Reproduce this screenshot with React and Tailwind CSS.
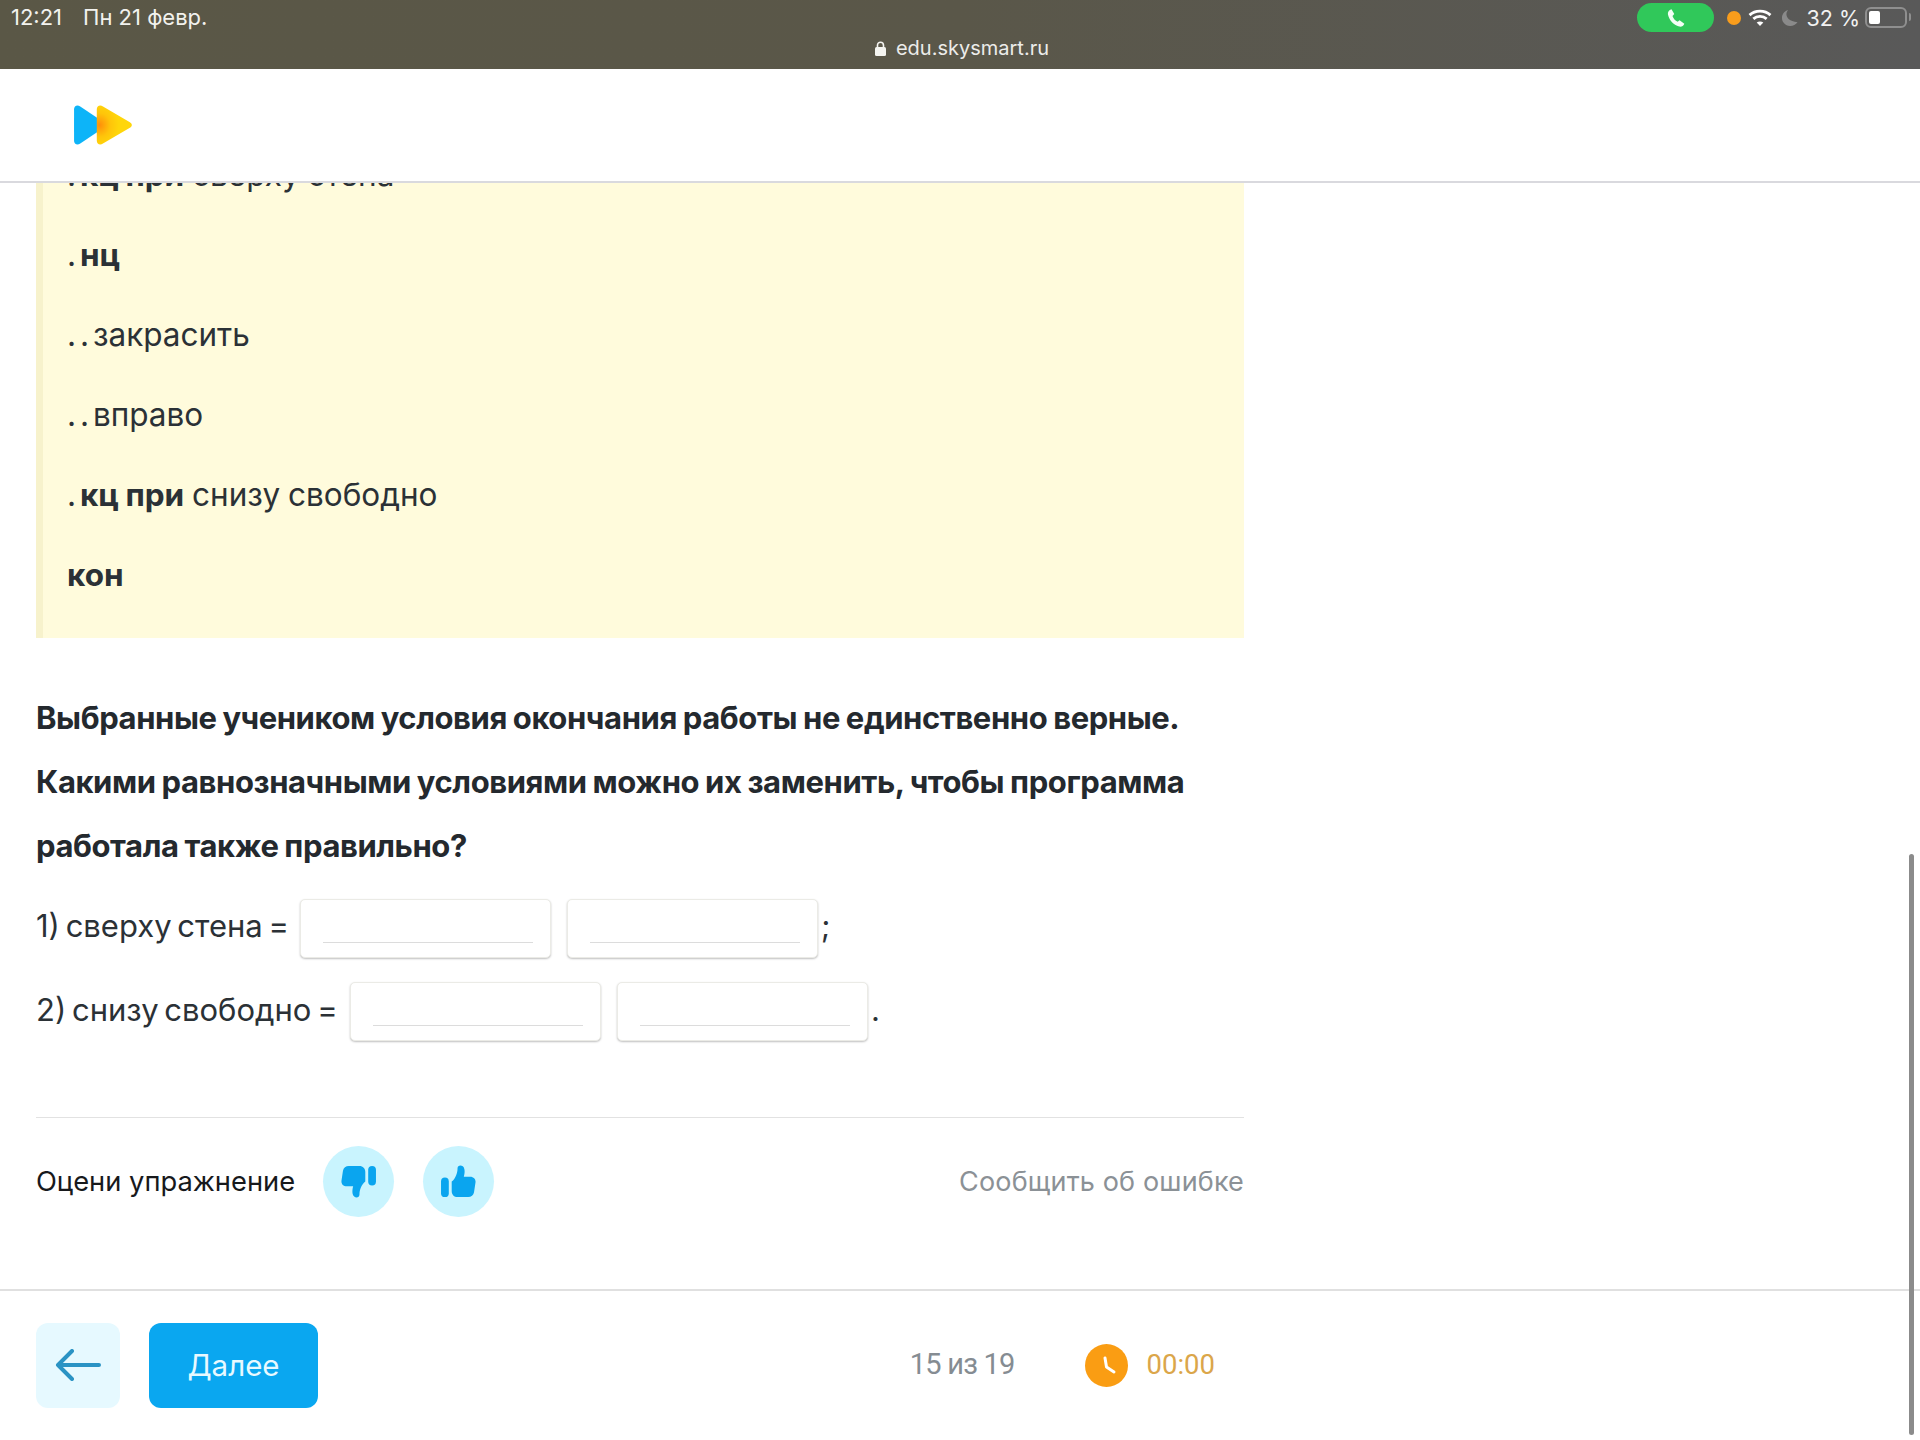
const font = "font-['Inter','Liberation_Sans',sans-serif]";
const digits = "font-['Roboto','Liberation_Sans',sans-serif]";

function Logo() {
    return (
        <svg width="60" height="40" viewBox="0 0 58 42" preserveAspectRatio="none">
            <defs>
                <radialGradient id="glow" cx="0.08" cy="0.5" r="0.55">
                    <stop offset="0" stopColor="#ff8f0a" />
                    <stop offset="0.55" stopColor="#ffc40a" />
                    <stop offset="1" stopColor="#ffd60a" />
                </radialGradient>
            </defs>
            <path d="M1 4.500C1 1 4 -0.500 7 1.500L24 14V28L7 40.500C4 42.500 1 41 1 37.500Z" fill="#0db4f8" />
            <path d="M23 4.500C23 1 26 -0.500 29 1.500L55 18C57.500 19.700 57.500 22.300 55 24L29 40.500C26 42.500 23 41 23 37.500Z" fill="url(#glow)" />
        </svg>
    );
}

function StatusBar() {
    return (
        <div className={`relative h-[69px] shrink-0 bg-gradient-to-r from-[#5a5746] via-[#5a5749] to-[#595959] text-white ${font}`}>
            <div className="flex items-start justify-between pl-[11px] pr-[13px] pt-[3px]">
                <div className="flex gap-[21px] pt-[1px] text-[22px] leading-[26px] text-[#f2f2ee]">
                    <span>12:21</span>
                    <span>Пн 21 февр.</span>
                </div>
                <div className="flex h-[29px] items-center">
                    <div className="mr-[13px] flex h-[29px] w-[77px] items-center justify-center rounded-full bg-[#30c85a]">
                        <svg width="20" height="20" viewBox="0 0 24 24" fill="#f4fff6">
                            <path d="M6.600 1.500 9.900 7.200 7.800 9.500C8.800 12.500 11 15 14 16.500L16.300 14.800 22 18.800C21 21.500 18.500 23 15.800 22.300 9 20.500 3.500 14 2.300 7.500 1.900 5 3.500 2.500 6.600 1.500Z" />
                        </svg>
                    </div>
                    <div className="mr-[7px] h-[14px] w-[14px] rounded-full bg-[#f99d1c]" />
                    <svg className="mr-[9px]" width="24" height="19" viewBox="0 0 25 20" fill="none" stroke="#fff" strokeWidth="3">
                        <path d="M1.500 7.500C7.500 1.800 17.500 1.800 23.500 7.500" />
                        <path d="M5.500 11.500C9.500 8 15.500 8 19.500 11.500" />
                        <path d="M12.500 19 9 15.300C11 13.800 14 13.800 16 15.300Z" fill="#fff" stroke="none" />
                    </svg>
                    <svg className="mr-[8px]" width="17" height="18" viewBox="0 0 18 18" fill="#8a8a8a">
                        <path d="M7.500 0.500C4 4.500 5 12 17.500 13.500 14 18.500 5.500 19 2 13 -0.500 8 2 2 7.500 0.500Z" />
                    </svg>
                    <span className="mr-[5px] text-[21.5px] leading-[26px] text-[#f2f2f2]">32 %</span>
                    <div className="relative h-[21px] w-[42px] rounded-[6px] border-2 border-[#8f8f8f] p-[2px]">
                        <div className="h-full w-[11px] rounded-[2px] bg-white" />
                        <div className="absolute -right-[6px] top-[4px] h-[8px] w-[2px] rounded-r-full bg-[#8f8f8f]" />
                    </div>
                </div>
            </div>
            <div className="absolute inset-x-0 top-[35px] flex items-center justify-center gap-[10px] pl-[4px] text-[20px] leading-[26px] text-[#ececea]">
                <svg width="11" height="15" viewBox="0 0 11 15">
                    <path d="M2.500 6.500V4.200C2.500 2.300 3.800 1.200 5.500 1.200S8.500 2.300 8.500 4.200V6.500" fill="none" stroke="#f4f4f0" strokeWidth="1.600" />
                    <rect x="0" y="6" width="11" height="9" rx="1.500" fill="#f4f4f0" />
                </svg>
                <span>edu.skysmart.ru</span>
            </div>
        </div>
    );
}

function Field() {
    return (
        <div className="flex h-[59px] w-[251px] shrink-0 items-end rounded-[5px] border border-[#ebebe6] bg-white pb-[14px] pl-[22px] pr-[17px] shadow-[0_1px_2px_rgba(0,0,0,0.25)]">
            <div className="h-px w-full bg-[#dcdcdc]" />
        </div>
    );
}

function CodeLine({ children }) {
    return <p className="h-[80px] text-[31.5px] leading-[80px] text-[#2b3136] [word-spacing:-1px]">{children}</p>;
}

function Dots({ children }) {
    return <span className="[word-spacing:-5px]">{children}</span>;
}

function RateButton({ down }) {
    return (
        <button className="flex h-[71px] w-[71px] items-center justify-center rounded-full bg-[#c9f4fe]">
            <svg width="35" height="33" viewBox="0 0 36 34" fill="#0aa5ef" className={down ? "rotate-180" : ""}>
                <rect x="0" y="13" width="8" height="20" rx="4" />
                <path d="M11 17C15 14 17 8 17 3.500 17 -0.500 23 -0.500 24 4 24.700 7 24 10 23.500 12H30C34 12 36 15 35.500 18L34 28C33.500 31 31 33 28 33H17C13.500 33 11 30.500 11 27Z" />
            </svg>
        </button>
    );
}

export default function App() {
    return (
        <div className={`relative flex h-[1440px] w-[1920px] flex-col overflow-hidden bg-white ${font}`}>
            <StatusBar />
            <header className="z-10 flex h-[114px] shrink-0 items-center border-b-2 border-[#d9d9de] bg-white pl-[73px]">
                <Logo />
            </header>
            <main className="min-h-0 flex-1 overflow-hidden px-[36px]">
                <div className="-mt-[48px] w-[1208px]">
                    <div className="h-[503px] border-l-[7px] border-[#f7f2cc] bg-[#fffbdc] pl-[24px]">
                        <CodeLine><Dots>. </Dots><b>кц при</b> сверху стена</CodeLine>
                        <CodeLine><Dots>. </Dots><b>нц</b></CodeLine>
                        <CodeLine><Dots>. . </Dots>закрасить</CodeLine>
                        <CodeLine><Dots>. . </Dots>вправо</CodeLine>
                        <CodeLine><Dots>. </Dots><b>кц при</b> снизу свободно</CodeLine>
                        <CodeLine><b>кон</b></CodeLine>
                    </div>
                    <h2 className="mt-[48px] text-[31px] font-bold leading-[64px] tracking-[-0.42px] text-[#24292e] [word-spacing:-1px]">
                        Выбранные учеником условия окончания работы не единственно верные.
                        <br />
                        Какими равнозначными условиями можно их заменить, чтобы программа
                        <br />
                        работала также правильно?
                    </h2>
                    <div className="mt-[21px] flex h-[59px] items-center text-[31px] text-[#2b3136] [word-spacing:-3px]">
                        <span className="w-[264px] shrink-0 pb-[4px]">1) сверху стена =</span>
                        <Field />
                        <span className="ml-[16px]"><Field /></span>
                        <span className="ml-[3px] pb-[4px]">;</span>
                    </div>
                    <div className="mt-[24px] flex h-[59px] items-center text-[31px] text-[#2b3136] [word-spacing:-3px]">
                        <span className="w-[314px] shrink-0 whitespace-nowrap pb-[3px]">2) снизу свободно =</span>
                        <Field />
                        <span className="ml-[16px]"><Field /></span>
                        <span className="ml-[3px] pb-[3px]">.</span>
                    </div>
                    <div className="mt-[76px] flex h-[128px] items-center justify-between border-t border-[#e2e2e2]">
                        <div className="flex items-center">
                            <span className="w-[287px] shrink-0 pt-[2px] text-[27.3px] text-[#17191c]">Оцени упражнение</span>
                            <RateButton down />
                            <span className="ml-[29px]"><RateButton /></span>
                        </div>
                        <span className="pt-[2px] text-[27px] tracking-[0.15px] text-[#8b9196]">Сообщить об ошибке</span>
                    </div>
                </div>
            </main>
            <footer className="flex h-[151px] shrink-0 items-center justify-between border-t-2 border-[#e0e0e0] bg-white pb-[1px] pl-[36px] pr-[705px]">
                <div className="flex items-center gap-[29px]">
                    <button className="flex h-[85px] w-[84px] items-center justify-center rounded-[12px] bg-[#e6f9ff]">
                        <svg width="46" height="32" viewBox="0 0 46 32" fill="none" stroke="#2a93c4" strokeWidth="4" strokeLinecap="round" strokeLinejoin="round">
                            <path d="M44 16H3M17 2 3 16 17 30" />
                        </svg>
                    </button>
                    <button className="h-[85px] w-[169px] rounded-[12px] bg-[#0aa7f0] text-[29.500px] text-[#e8f9ff]">Далее</button>
                </div>
                <div className="flex items-center">
                    <span className={`mr-[70px] text-[29px] tracking-[-0.8px] text-[#858c92] ${digits}`}>15 из 19</span>
                    <svg className="mr-[19px]" width="43" height="43" viewBox="0 0 43 43">
                        <circle cx="21.500" cy="21.500" r="21.500" fill="#fa9d13" />
                        <path d="M20 14 21.500 23 29 28" fill="none" stroke="#fff" strokeWidth="3" strokeLinecap="round" strokeLinejoin="round" />
                    </svg>
                    <span className={`text-[27.5px] text-[#dba64a] ${digits}`}>00:00</span>
                </div>
            </footer>
            <div className="absolute left-[1909px] top-[854px] h-[581px] w-[5px] rounded-full bg-[#8b8b8b]" />
        </div>
    );
}
